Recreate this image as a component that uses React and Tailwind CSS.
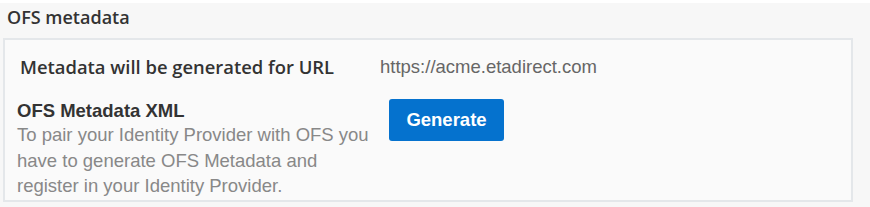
export default function App() {
  return (
    <div className="w-[870px] h-[207px] bg-[#f7f7f7] border-t-[3px] border-white overflow-hidden">
      <div
        className="pl-[7px] pt-[2px] h-[35px] text-[18px] leading-[24px] font-semibold text-[#333]"
        style={{ fontFamily: '"Open Sans", "Noto Sans", sans-serif' }}
      >
        OFS metadata
      </div>
      <div className="ml-[3px] w-[850px] h-[164px] border-2 border-[#e4e7ea] bg-[#fafafa] pl-[12px] pt-[14px]">
        <div className="flex items-center h-[26px]">
          <div
            className="w-[363px] pl-[3px] text-[18.4px] font-semibold text-[#333]"
            style={{ fontFamily: '"Open Sans", "Noto Sans", sans-serif' }}
          >
            Metadata will be generated for URL
          </div>
          <div
            className="text-[18.5px] text-[#666]"
            style={{ fontFamily: '"Liberation Sans", Arial, sans-serif' }}
          >
            https://acme.etadirect.com
          </div>
        </div>
        <div className="flex mt-[20px]" style={{ fontFamily: '"Liberation Sans", Arial, sans-serif' }}>
          <div className="w-[362px]">
            <div className="text-[18.5px] font-bold text-[#333] leading-[22px]">OFS Metadata XML</div>
            <div className="text-[18.5px] text-[#888] leading-[25.5px] mt-[0px]">
              To pair your Identity Provider with OFS you have to generate OFS Metadata and register in your Identity Provider.
            </div>
          </div>
          <button className="w-[115px] h-[42px] ml-[10px] mt-[-1px] rounded-[3px] bg-[#0572ce] text-white text-[18.5px] font-bold">
            Generate
          </button>
        </div>
      </div>
    </div>
  );
}
